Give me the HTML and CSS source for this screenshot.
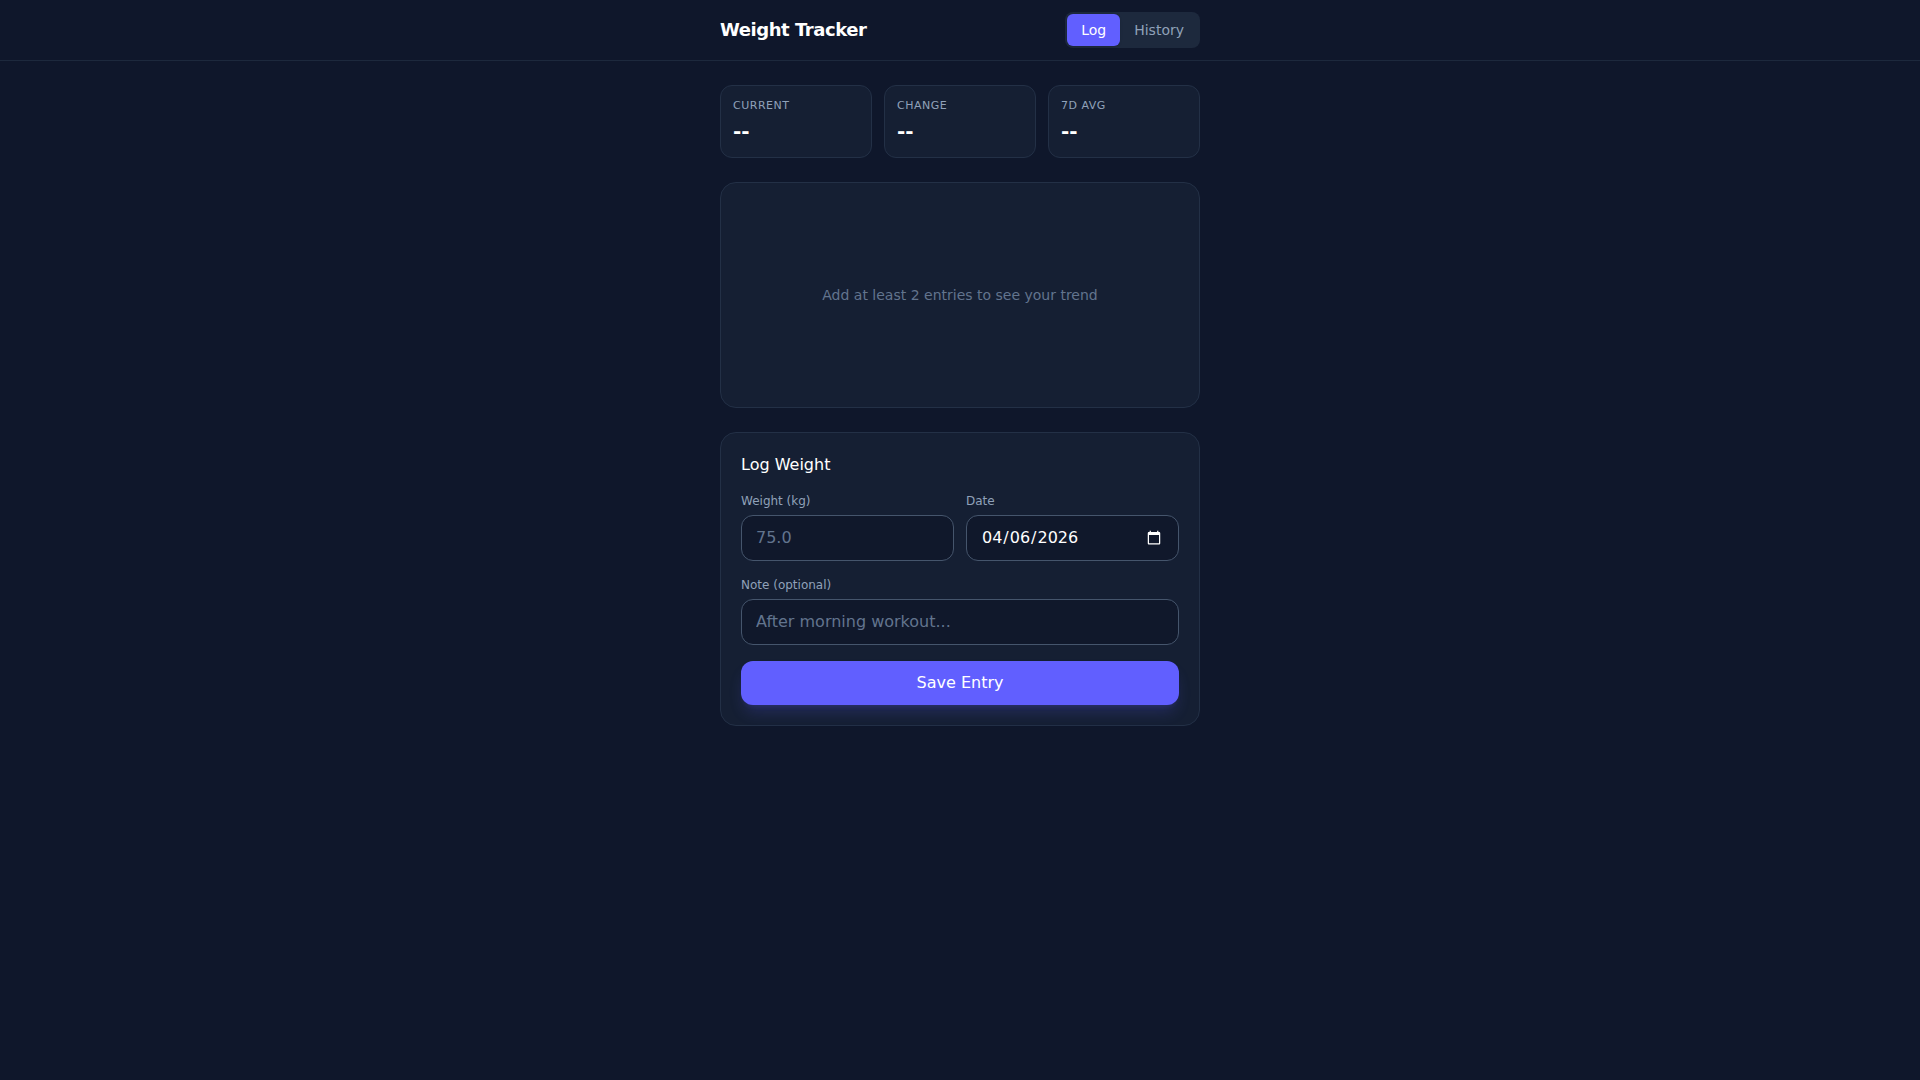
FILE: index.html
```html
<!DOCTYPE html>
<html lang="en">
<head>
    <meta charset="UTF-8">
    <meta name="viewport" content="width=device-width, initial-scale=1.0">
    <title>Weight Tracker</title>
    <link rel="stylesheet" href="styles.css">
</head>
<body>
    <header class="header">
        <div class="header-inner">
            <h1>Weight Tracker</h1>
            <nav class="tabs">
                <button type="button" class="tab active">Log</button>
                <button type="button" class="tab">History</button>
            </nav>
        </div>
    </header>

    <main class="container">
        <div class="stats">
            <div class="stat">
                <p class="stat-label">Current</p>
                <p class="stat-value">--</p>
            </div>
            <div class="stat">
                <p class="stat-label">Change</p>
                <p class="stat-value">--</p>
            </div>
            <div class="stat">
                <p class="stat-label">7d Avg</p>
                <p class="stat-value">--</p>
            </div>
        </div>

        <div class="card chart-empty">
            <p>Add at least 2 entries to see your trend</p>
        </div>

        <form class="card entry-form">
            <h2>Log Weight</h2>
            <div class="form-row">
                <div class="form-group">
                    <label for="weight">Weight (kg)</label>
                    <input type="number" id="weight" name="weight" step="0.1" placeholder="75.0" required>
                </div>
                <div class="form-group">
                    <label for="date">Date</label>
                    <input type="date" id="date" name="date" value="2026-04-06" required>
                </div>
            </div>
            <div class="form-group">
                <label for="note">Note (optional)</label>
                <input type="text" id="note" name="note" placeholder="After morning workout...">
            </div>
            <button type="submit" class="btn-submit">Save Entry</button>
        </form>
    </main>
</body>
</html>
```
FILE: styles.css
```css
* {
    box-sizing: border-box;
    margin: 0;
    padding: 0;
}

body {
    min-height: 100vh;
    font-family: "DejaVu Sans", sans-serif;
    font-size: 16px;
    line-height: 24px;
    background-color: #0f172b;
    color: #fff;
    color-scheme: dark;
}

button,
input {
    font: inherit;
    color: inherit;
}

.header {
    border-bottom: 1px solid #1d293d;
}

.header-inner {
    display: flex;
    align-items: center;
    justify-content: space-between;
    max-width: 512px;
    margin: 0 auto;
    padding: 12px 16px;
}

h1 {
    font-size: 18px;
    line-height: 28px;
    font-weight: bold;
    letter-spacing: -0.45px;
}

.tabs {
    display: flex;
    padding: 2px;
    border-radius: 8px;
    background-color: #1d293d;
}

.tab {
    padding: 6px 14px;
    border: none;
    border-radius: 6px;
    background: none;
    font-size: 14px;
    line-height: 20px;
    color: #90a1b9;
    cursor: pointer;
}

.tab.active {
    background-color: #615fff;
    box-shadow: 0 1px 3px rgba(0, 0, 0, 0.1);
    color: #fff;
}

.container {
    display: flex;
    flex-direction: column;
    gap: 24px;
    max-width: 512px;
    margin: 0 auto;
    padding: 24px 16px;
}

.stats {
    display: grid;
    grid-template-columns: repeat(3, 1fr);
    gap: 12px;
}

.stat {
    padding: 12px;
    border: 1px solid #233046;
    border-radius: 12px;
    background-color: #151f33;
}

.stat-label {
    margin-bottom: 3px;
    font-size: 11px;
    line-height: 16px;
    letter-spacing: 0.5px;
    text-transform: uppercase;
    color: #90a1b9;
}

.stat-value {
    font-size: 20px;
    line-height: 28px;
    font-weight: bold;
}

.card {
    padding: 20px;
    border: 1px solid #233046;
    border-radius: 16px;
    background-color: #151f33;
}

.chart-empty {
    display: flex;
    align-items: center;
    justify-content: center;
    min-height: 226px;
    font-size: 14px;
    line-height: 20px;
    color: #62748e;
}

.entry-form {
    display: flex;
    flex-direction: column;
    gap: 16px;
}

h2 {
    font-size: 16px;
    font-weight: normal;
}

.form-row {
    display: grid;
    grid-template-columns: 1fr 1fr;
    gap: 12px;
}

.form-group {
    min-width: 0;
}

label {
    display: block;
    margin-bottom: 6px;
    font-size: 12px;
    line-height: 16px;
    color: #90a1b9;
}

input {
    display: block;
    width: 100%;
    padding: 10px 14px;
    border: 1px solid #45556c;
    border-radius: 12px;
    background-color: #10182b;
}

/* keep the date field as tall as the others */
input::-webkit-datetime-edit,
input::-webkit-datetime-edit-fields-wrapper {
    padding-top: 0;
    padding-bottom: 0;
}

input::placeholder {
    color: #62748e;
}

input:focus {
    outline: none;
    border-color: #615fff;
}

.btn-submit {
    padding: 10px;
    border: none;
    border-radius: 12px;
    background-color: #615fff;
    box-shadow: 0 10px 15px -3px rgba(97, 95, 255, 0.2), 0 4px 6px -4px rgba(97, 95, 255, 0.2);
    cursor: pointer;
}
```
